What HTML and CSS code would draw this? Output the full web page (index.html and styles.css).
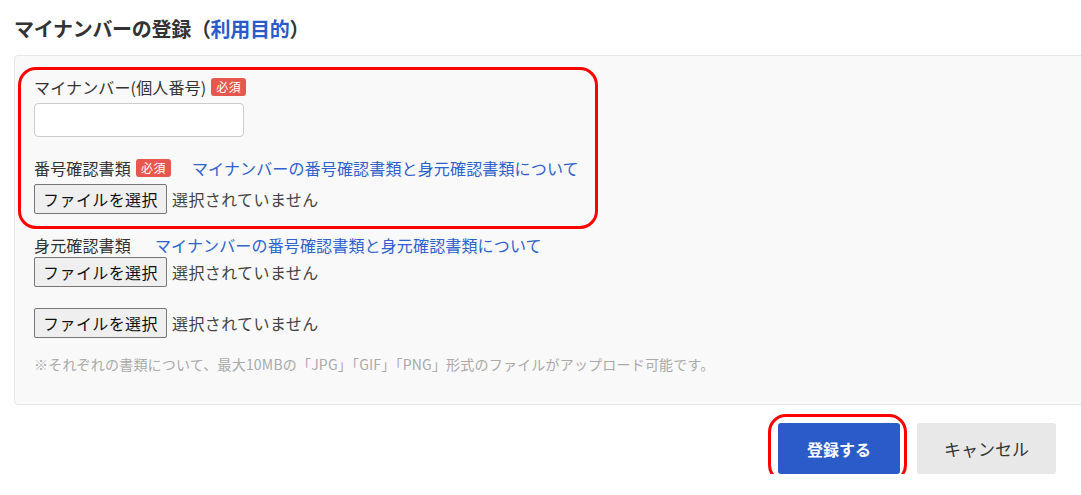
FILE: index.html
```html
<!DOCTYPE html>
<html lang="ja">
<head>
<meta charset="utf-8">
<title>マイナンバーの登録</title>
<link rel="stylesheet" href="styles.css">
</head>
<body>
<div class="page">
  <h1 class="title">マイナンバーの登録（<span class="title-accent">利用目的</span>）</h1>
  <div class="panel">
    <div class="field">
      <div class="label-row"><span class="label">マイナンバー(個人番号)</span><span class="badge">必須</span></div>
      <input class="text-input" type="text">
    </div>
    <div class="field field-gap">
      <div class="label-row"><span class="label">番号確認書類</span><span class="badge">必須</span><a class="link link-after-badge" href="#">マイナンバーの番号確認書類と身元確認書類について</a></div>
      <div class="file-row"><button class="file-btn" type="button">ファイルを選択</button><span class="file-status">選択されていません</span></div>
    </div>
    <div class="field field-gap">
      <div class="label-row plain"><span class="label">身元確認書類</span><a class="link" href="#">マイナンバーの番号確認書類と身元確認書類について</a></div>
      <div class="file-row tight"><button class="file-btn" type="button">ファイルを選択</button><span class="file-status">選択されていません</span></div>
      <div class="file-row second"><button class="file-btn" type="button">ファイルを選択</button><span class="file-status">選択されていません</span></div>
    </div>
    <p class="note">※それぞれの書類について、最大10MBの「JPG」「GIF」「PNG」形式のファイルがアップロード可能です。</p>
    <div class="ring ring-form"></div>
  </div>
  <div class="actions">
    <div class="submit-wrap">
      <button class="btn btn-primary" type="button">登録する</button>
      <div class="ring ring-btn"></div>
    </div>
    <button class="btn btn-cancel" type="button">キャンセル</button>
  </div>
</div>
</body>
</html>
```

FILE: styles.css
```css
html, body {
  margin: 0;
  padding: 0;
  background: #ffffff;
  overflow: hidden;
}

body {
  font-family: "Noto Sans CJK JP", "Noto Sans", sans-serif;
  color: #333333;
}

.page {
  padding: 0 0 0 14px;
}

.title {
  margin: 0;
  padding-top: 15px;
  height: 40px;
  font-size: 20px;
  line-height: 28px;
  font-weight: bold;
  color: #333333;
  box-sizing: border-box;
  letter-spacing: -0.3px;
}

.title-accent {
  color: #2a5bc8;
}

.panel {
  position: relative;
  margin-top: 15px;
  margin-right: -20px;
  background: #f9f9f9;
  border: 1px solid #e6e6e6;
  border-radius: 4px;
  padding: 21px 20px 32px 19px;
  height: 350px;
  box-sizing: border-box;
}

.field {
  display: flex;
  flex-direction: column;
  align-items: flex-start;
}

.field-gap {
  margin-top: 21px;
}

.label-row {
  display: flex;
  align-items: center;
  height: 20px;
  font-size: 16px;
  line-height: 20px;
  letter-spacing: 0.15px;
}

.label {
  color: #333333;
}

.badge {
  display: inline-block;
  margin-left: 5px;
  background: #e8574d;
  color: #ffffff;
  font-size: 12px;
  line-height: 18px;
  height: 18px;
  padding: 0 5px;
  border-radius: 3px;
  letter-spacing: 0.5px;
}

.link {
  color: #2f62cc;
  text-decoration: none;
  margin-left: 24px;
}

.link.link-after-badge {
  margin-left: 21px;
}

.text-input {
  margin-top: 6px;
  width: 210px;
  height: 34px;
  box-sizing: border-box;
  border: 1px solid #cccccc;
  border-radius: 4px;
  background: #ffffff;
}

.file-row {
  display: flex;
  align-items: center;
  margin-top: 6px;
}

.file-row.tight {
  margin-top: 2px;
}

.file-row.second {
  margin-top: 21px;
}

.file-btn {
  height: 30px;
  width: 133px;
  box-sizing: border-box;
  padding: 0;
  background: #efefef;
  border: 1px solid #767676;
  border-radius: 2px;
  font-family: "Noto Sans CJK JP", sans-serif;
  font-size: 16px;
  color: #111111;
  letter-spacing: 0.4px;
}

.file-status {
  margin-left: 5px;
  font-size: 16px;
  color: #444444;
  letter-spacing: 0.4px;
}

.note {
  margin: 16px 0 0 0;
  font-size: 14px;
  line-height: 20px;
  color: #aaaaaa;
  letter-spacing: 0.2px;
}

.ring {
  position: absolute;
  border: 3px solid #ff0000;
  border-radius: 18px;
  box-sizing: border-box;
  pointer-events: none;
}

.ring-form {
  left: 3px;
  top: 11px;
  width: 580px;
  height: 162px;
}

.actions {
  display: flex;
  justify-content: flex-end;
  align-items: center;
  gap: 17px;
  margin-top: 18px;
  padding-right: 25px;
}

.submit-wrap {
  position: relative;
}

.btn {
  height: 51px;
  border: none;
  border-radius: 3px;
  font-family: "Noto Sans CJK JP", sans-serif;
  font-size: 16px;
  display: block;
}

.btn-primary {
  width: 122px;
  background: #2a5bc8;
  color: #ffffff;
  font-weight: bold;
}

.btn-cancel {
  width: 139px;
  background: #e8e8e8;
  color: #333333;
  font-size: 17px;
}

.ring-btn {
  left: -10px;
  top: -9px;
  width: 139px;
  height: 69px;
}
```
